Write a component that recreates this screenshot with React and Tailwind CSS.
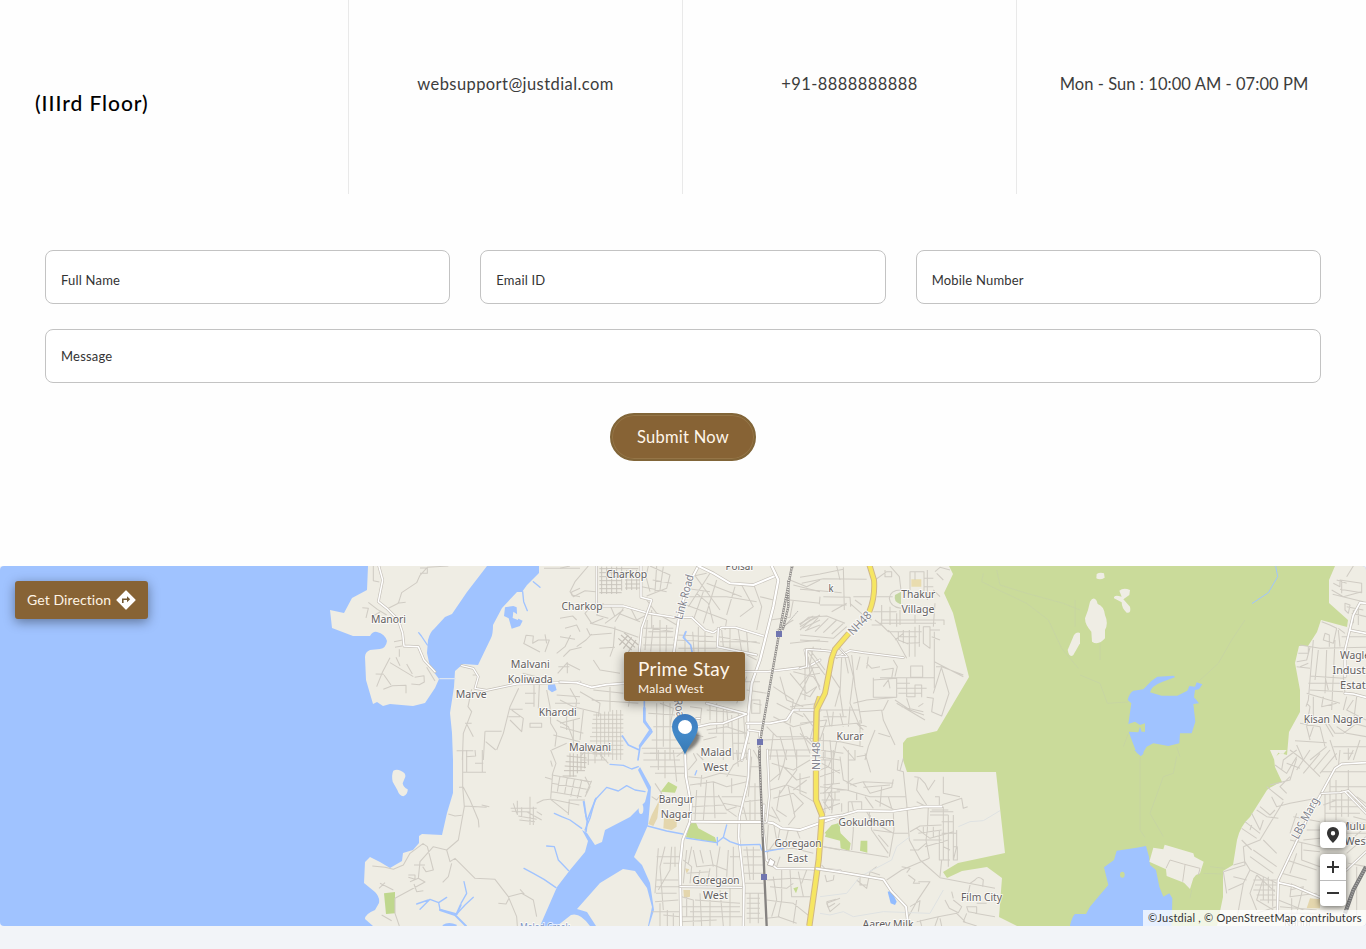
import React from "react";

const WATER = "#a0c3ff";
const LAND = "#efede4";
const GREEN = "#cadb9a";

/* Each tile keeps its own drawing grid, three units to the pixel. */
function Tile({ x, y, children }) {
  return <g transform={`translate(${x} ${y}) scale(0.33333)`}>{children}</g>;
}

function Minor({ d }) {
  return <path d={d} fill="none" stroke="#d0ccc4" strokeWidth="3.2" strokeLinejoin="round" />;
}

function Faint({ d }) {
  return <path d={d} fill="none" stroke="#c7d5a2" strokeWidth="3" />;
}

function Road({ d, w = 6 }) {
  return (
    <g fill="none" strokeLinejoin="round" strokeLinecap="round">
      <path d={d} stroke="#c6c1b9" strokeWidth={w + 4} />
      <path d={d} stroke="#ffffff" strokeWidth={w} />
    </g>
  );
}

function Stream({ d, w = 4 }) {
  return <path d={d} fill="none" stroke={WATER} strokeWidth={w} strokeLinejoin="round" strokeLinecap="round" />;
}

function Label({ x, y, w, children, fill = "#636060", rotate, opacity }) {
  return (
    <text
      x={x}
      y={y}
      textAnchor="middle"
      textLength={w}
      lengthAdjust="spacingAndGlyphs"
      fontSize="11.5"
      fontFamily="'Noto Sans', sans-serif"
      fill={fill}
      opacity={opacity}
      stroke="#ffffff"
      strokeOpacity="0.75"
      strokeWidth="2"
      strokeLinejoin="round"
      paintOrder="stroke"
      transform={rotate ? `rotate(${rotate} ${x} ${y})` : undefined}
    >
      {children}
    </text>
  );
}

function Terrain() {
  return (
    <g>
      <rect x="0" y="566" width="1366" height="360" fill={WATER} />
      <path
        fill={LAND}
        d="M368 566L367 590L352 598L344 613L330 610L332 628L353 636L370 636Q373 631 377 632Q385 634 387 641Q386 648 380 649L370 650Q365 652 365 657L366 680L373 704L377 702L383 706L390 704L413 706L425 703L435 688L439 679L430 667L427 653L428 640Q430 632 434 629L445 617L452 614L467 592L487 566Z"
      />
      <path
        fill={LAND}
        d="M539 566V573L527 585L522 592L517 592L502 608L493 625Q493 634 491 638L478 665L463 664L455 671L454 687L450 713L452 733L453 760V793L447 813L442 835L422 834L419 836V843L413 850L403 853L402 861L390 868L380 862L370 857L365 862L364 883L375 892Q380 897 379 903L375 910Q365 914 365 919L373 926H1366V566Z"
      />
      <path
        fill={GREEN}
        d="M949 566L953 574L944 593L953 613L969 677L937 731L907 738L903 743V760L907 772H996L1005 853L958 863L943 872L947 878L962 871L987 867L1002 878L999 917L1017 926H1217L1223 897V871L1233 865L1237 840Q1240 826 1250 817L1267 790Q1275 784 1282 782L1275 767L1274 758L1280 753L1287 755L1289 732L1300 712V690L1295 663L1299 646H1308L1317 632L1321 620L1347 627L1348 620L1329 603V580L1335 566Z"
      />
      <path fill={WATER} d="M540 926L557 887L570 870L585 852L588 841L582 830L587 833L595 845L602 842L605 830L630 817L645 802L648 790L638 770L640 767L651 787L650 803L648 825L634 857L642 865L650 883L654 910L649 926H648L652 907L647 888L635 871L623 869L600 883L577 909L587 912L596 926H590Q580 912 571 915L557 926Z" />
      <ellipse cx="641" cy="809" rx="2.4" ry="5" fill={LAND} />
    </g>
  );
}

function WestTiles() {
  return (
    <g>
      <Tile x={320} y={560}>
        <Minor d="M160 18V62L178 66M385 18L322 22L300 46L290 68L245 98L235 130L205 145M300 24H322V40H300M232 130L257 127M145 127L172 148L200 165M127 143L145 145L138 174M155 170L180 156M222 245L248 240M225 262L246 258M238 268V290M210 293L188 335L170 380M210 308L280 350M228 292L240 317M260 312L277 342M167 342L192 343M192 345L213 375M190 388L217 377L258 376V400M274 372L298 374L313 366L312 347L284 352M320 322L345 363" />
        <Minor d="M455 388L444 440L455 455L430 520L427 600M435 490H455M410 572H460M440 492L460 530M458 345H475M596 385L570 440L550 520L530 570M496 514H545M495 514L490 600M497 545L527 570M575 450L610 475L605 515L570 480M630 490H665V502H630ZM570 448H608M565 470H600M612 250L618 226L640 228L638 250L655 240H688L675 276M675 223L680 250M610 250L660 276M752 225L735 260L710 280M713 340L742 308V340M715 320H748M608 340L650 350M658 375L655 445M642 375V440M615 400H648M615 430H642M680 390L690 440L692 490L710 520L705 560M710 405L780 410M705 430H780M710 480L745 500L760 540M700 525L780 545M695 570L740 550M672 25H780M780 85L755 96V105L780 110M720 490L780 475M740 450V510" />
        <Road w={4.5} d="M176 16L188 60L175 125L200 145L235 180L248 220L252 258L295 260L312 300L345 335" />
        <Road w={4} d="M425 317L460 325L475 350L465 385L500 391L590 372L690 369L780 366" />
        <path d="M358 356H407" stroke="#dbe4f2" strokeWidth="4" />
        <Stream d="M322 255L304 228L296 218" />
        <Stream d="M608 95L611 125L622 152M640 65L660 82" />
        <path fill={WATER} d="M555 142L580 138L590 142L592 175L608 182L600 198L575 206L566 175L552 168ZM684 375L705 373L710 390L696 397L684 388Z" />
        <path fill={LAND} d="M580 155L596 166L594 180L578 174Z" />
      </Tile>

      <Tile x={340} y={750}>
        <path fill={LAND} d="M160 62Q170 56 182 62Q198 68 196 80L188 100Q190 112 203 118Q205 132 190 139Q178 138 172 120L158 95Q154 75 160 62Z" />
        <path fill="#bfd78d" d="M132 430L165 426V490L138 492Z" />
        <Minor d="M368 0V110L373 170L355 270L320 300L280 290L240 335L235 385L210 395M368 67H438M378 20L407 18L405 0M380 0V67M405 40H430M427 0V67M357 112H370L390 150L415 210L417 232M373 168L440 172M425 165L448 170M325 192L345 198L365 196M248 280L262 290L280 360L258 365L248 350M97 348L135 352L160 358L190 345L210 310L250 280M222 345L255 345M205 375H225V388L205 382M235 385L255 396L165 445V490L178 528M120 400L160 420M117 415L135 398M222 402L230 425L250 422M320 300L330 335L345 325L405 385L465 388L505 440L530 500L532 528M335 340L325 380L308 397M505 440L545 430L580 450L590 500M540 418L553 432M475 460L498 462L507 445M155 512L125 495" />
        <Minor d="M512 175H590M520 160L530 190M532 152V195M515 184L570 186M545 172V205M560 185L605 210M570 140V225M535 198L590 208M580 170V225M590 160L610 150L630 148M590 185L606 195M538 210L585 215M632 0L648 40L638 70L632 145M635 75L752 95M635 100L740 118M635 125L725 140M630 147L718 165M688 148L685 195M632 148L685 190M660 78L652 125M682 82L674 130M703 88L692 140M725 92L712 145M755 92L738 130M735 150L690 150M615 82L635 88M637 50L632 32" />
        <path d="M680 18L740 24M677 35L740 38M674 48L738 52M672 62L735 62M690 10V80M700 10V80M712 12V70M723 5V60M734 5V55M668 78H710" stroke="#c8c3bb" strokeWidth="3" />
        <Stream w={5} d="M768 145L742 210L738 245M732 155L740 210" />
        <Stream w={4} d="M643 190L665 200L690 210L725 235M620 288L643 290L655 330L686 362M552 355L580 370L612 388L648 413" />
        <Stream w={4} d="M372 395L380 430L363 460M400 442L375 465L350 492L300 478L296 458L270 448L240 478M265 450L230 462M296 458L320 442" />
        <Stream w={6} d="M300 480L345 495L378 528M350 492L362 465" />
        <path fill={WATER} d="M308 525Q325 514 350 524V528H308Z" />
      </Tile>
    </g>
  );
}

function CityTiles() {
  return (
    <g>
      <Tile x={560} y={560}>
        <path d="M118 26H235M118 38H235M118 50H188M118 62H185M118 74H183M118 86H185M118 98H185M125 20V102M140 20V102M155 20V102M170 20V102M185 20V92M200 30V90M215 30V90M230 30V90M195 60H240M195 72H240M195 84H240" stroke="#c9c5bd" strokeWidth="3" />
        <path d="M175 235L215 270M183 225L225 262M192 218L235 255M205 225L178 255M215 232L190 266M228 240L205 276" stroke="#c5c0b8" strokeWidth="3.5" />
        <path d="M100 465H190M98 478H190M96 491H190M96 504H190M96 517H190M90 530H190M90 543H190M98 556H190M98 569H190M98 582H190M110 460V590M122 460V590M134 455V590M146 455V590M158 450V600M170 450V600M182 450V600" stroke="#cbc7be" strokeWidth="2.5" />
        <Minor d="M0 25L30 18M85 18L45 65L30 95L40 110L75 92L107 95M0 175L38 168L50 180M15 205L50 195L60 215M0 230L45 238M50 260L78 240L95 222M10 290L30 270L65 262M100 130L75 160L95 190L130 175M130 130L110 165L145 175M135 190L190 150M150 135L165 170M190 145L165 185M90 190L160 205L235 232M80 205L90 225L155 220M165 200L160 262L150 290M175 160L240 185M210 140L230 180L260 165M118 265L165 262M100 300L120 330L180 340M20 310L60 330M30 385L50 420L45 465M0 420L40 440L120 460M60 395L120 430L115 470M100 390L190 400M95 420L235 430M150 380V455M215 380L205 440M0 500L70 520M40 480V560M70 450L60 540" />
        <Minor d="M265 18L258 50L270 95M270 18L330 45L320 85L260 108M245 80L320 95M290 18L285 95M278 60L335 70M310 20L300 90M260 120L290 160L350 195M275 150V205L340 215M250 205H340M262 180L255 270M280 195L272 275M300 180V275M320 195L318 275M250 232H340M250 255H340M265 215H335M390 50L440 40M375 85L450 95M380 110H500M400 40L480 150M450 40L385 140M365 130L500 180M430 95L400 180M470 60L430 190M440 70L545 110M525 80L500 165M545 75L580 140L540 170M500 110L590 125M410 100L445 130L460 190M340 240L470 245M355 265H470M375 215V275M398 215L402 275M415 200V275M435 215V275M355 225L460 230M485 210L490 260M510 205V270M535 210L545 275M560 215L565 280M475 230L600 250M480 245H590M500 180L495 210M580 70L605 140L590 210" />
        <Minor d="M560 285L590 300M560 350L530 430M555 365H600M560 390L620 400M575 420H600V460H575ZM580 430L605 435M450 435V480M470 430V520M490 440V600M440 450L540 460M500 445L505 500M515 465L520 600M535 460V600M550 455L560 600M445 520H560M430 540L470 530M520 550H570M520 580H570M390 440L425 445L420 490M380 500V600M390 520L430 530M300 430L340 445L330 500M310 425V560M330 430V600M265 460L345 465M280 500H340M275 540H370M245 565H370M290 430V600M350 590L375 570M270 580H340M410 580L430 600M440 510L500 500L560 520" />
        <Minor d="M630 180L690 172L700 120M690 60L740 80L780 60M700 75L780 95M690 120L780 130M640 120L600 110M700 25V18M720 200L780 165M728 205L780 180M735 212L780 195M718 192L760 168M650 210L700 180M690 250L780 240M660 330L780 322M690 340L740 400L770 380M660 350L680 420L730 440M640 380L700 420L690 490M650 430L730 470M640 470L700 500L780 480M700 335L760 350L780 380M620 500L650 530H740L770 560M640 520L630 600M660 530L680 600M690 500L710 600M720 500L750 580M600 540L780 535M620 570H760M735 325V420M690 440L780 430M760 320L700 450" />
        <Road d="M0 366L50 368L95 382L140 374L192 370" w={5} />
        <Road d="M110 18V130" w={3} />
        <Road d="M130 138H190L265 160L340 172H395L435 210L460 218L485 202L525 202L610 228" w={4.5} />
        <Road d="M243 18V112L275 120L245 205L238 275" w={4.5} />
        <Road d="M415 18L385 75L360 150L342 275" w={6} />
        <Road d="M415 18L460 40L510 70L580 75L645 48" w={6} />
        <Road d="M635 18L655 60L640 140L600 300L575 370L565 460V520L545 600" w={6.5} />
        <Road d="M475 205L472 260L590 285M555 335H620L745 320L780 300M745 320L735 270L780 268" w={4.5} />
        <Road d="M440 430L560 462L490 490L450 492L415 500M560 490H630L680 480L700 450H780" w={5} />
        <Road d="M420 475H410M565 510L600 515L595 560" w={4} />
        <Stream w={5} d="M378 215L370 232L392 255L398 285M253 425V480L276 515L240 560L234 600M187 528L205 555L238 570" />
        <Stream w={8} d="M253 445V485L272 510L240 558" />
        <path d="M696 18L657 222L600 546L598 600M685 60V140L668 210" stroke="#8d8a88" strokeWidth="7" fill="none" />
        <path d="M696 18L657 222L600 546L598 600M685 60V140L668 210" stroke="#efede4" strokeWidth="4.5" strokeDasharray="3 4" fill="none" />
        <path d="M663 212L715 152" stroke="#8d8a88" strokeWidth="2" strokeDasharray="5 3" />
        <path fill="#7176b0" d="M648 213H666V231H648ZM591 537H609V555H591Z" />
        <path d="M780 410L770 440L768 545" fill="none" stroke="#d0ba92" strokeWidth="19" />
        <path d="M780 410L770 440L768 545" fill="none" stroke="#f6e662" strokeWidth="13" />
      </Tile>

      <Tile x={580} y={750}>
        <path fill="#c4da90" d="M242 125L265 95L292 110L285 128ZM330 220L348 218L355 235L405 262L410 278L318 262ZM740 245L780 215V272L735 260ZM640 415L655 410L648 430Z" />
        <path fill="#e4d6ad" d="M215 195L238 150L232 205L220 228L205 222ZM252 205H290V230L275 240L250 235ZM310 420H330V440L312 445ZM315 355L328 358L320 370Z" />
        <Minor d="M190 10H310M190 30H300M210 50H320M225 70H322M235 0V60M255 0V85M280 0L290 95M0 20L20 0L60 12L85 40M0 10H95M0 30H80M25 0V45M45 0V40M65 0V30M225 100L245 130L230 150L215 140M0 90L28 95M15 80L30 110L15 140M325 60L350 30L340 10M325 80L370 85L420 70L500 80M330 105L400 95L440 110L500 95M350 120L345 210M380 90L370 210M400 95L405 205M415 135L440 180L470 170M425 140H500M430 160L485 170M435 175L470 200M335 140H420M335 170L430 165M320 190H440M455 85V130M500 20L460 45L440 80M470 0L475 50M365 75L362 110M515 20L505 140M520 0L540 35M510 50H540M505 110H545M495 155L540 150M485 190H545M490 170L500 210M510 150V210M525 100V210" />
        <Minor d="M565 18H690M575 40L640 60L690 30M590 0L600 70L570 95M620 0L610 50L650 90L690 80M650 0V60L600 130M570 120L620 105L680 130M580 145L640 130L670 160L640 190M600 120L590 180L620 200M625 110L645 200L625 225M660 70V130L710 160M680 90L640 120M575 170L600 215M555 190L590 205M715 20L780 30M725 40L780 70M720 80L780 60M735 0V190M755 0V180M730 105L780 100M720 130L780 125M725 150H780M725 180L780 160M740 200L720 220M610 45L595 90" />
        <Minor d="M235 295L225 430M255 290L240 350L250 480M275 290L270 360L235 420M230 320H300M250 340H300M230 390H295M225 410H300M285 290V350M228 430H290M225 455L295 450M215 485H300M250 495L300 500M240 460V528M262 480V528M280 490V528M310 330L335 350L330 400M320 300L310 400M340 300L350 350L400 345L440 360M360 300L370 340M390 300L400 350M420 290L410 350M445 300L440 380M320 370L390 365M360 360L350 410M390 355L380 410M410 350V410M305 440L340 450V528M320 440V500M360 430L365 528M390 430V528M420 420L430 528M450 415V528M305 470H480M305 500H490M330 485H480M345 450L480 460M450 320H480M335 290L325 340M460 290V400M300 515L410 510" />
        <Minor d="M490 300H540M490 320H545M490 345H550M490 370H550M500 290L510 390M520 290V390M490 400H550M495 430H555M500 445H540M500 460H540M500 475H540M500 490H540M500 505H550M510 430V520M535 430V520M565 225L560 300M580 215L590 270L560 310M600 235L590 290M625 240L615 280M650 240L660 265M555 300L640 295L700 310M600 320L590 350M560 390L640 385L695 390M570 410L620 415L640 400M580 380L590 450L575 500M605 360V450L595 500L650 520M630 360L635 440L690 440M655 365L670 440M680 360L665 400M560 450L600 455M650 450L640 520M560 505L600 500M600 455L640 460L690 500M730 290L780 300M725 345L740 362M740 460L780 445M740 460L750 485L780 460" />
        <Road w={6} d="M315 0L318 80L333 160L330 215L308 270L300 345L303 528" />
        <Road w={5} d="M508 0L505 80L500 110L478 200L476 260L485 340L492 410L490 528" />
        <Road w={6} d="M335 215L440 216H555L580 220L605 235L660 240L780 198" />
        <Road w={4} d="M562 0L568 140L560 215M300 410L485 412" />
        <Road w={5} d="M552 165L548 230L560 330L590 355L690 356L780 362" />
        <path d="M570 325L585 335L578 350L562 345Z" fill="#fff" stroke="#bcb7b0" strokeWidth="3" />
        <Stream w={4} d="M90 43L130 46L155 57L175 50M195 125L165 120L140 107L115 123L80 112L45 150L30 205L15 240M10 155L18 200M203 228L260 243L308 252M318 264L410 278L430 262L450 275L480 285L540 283L545 300M440 225L430 262M412 285V262M555 305L610 295M345 75L350 62" />
        <path d="M538 0L548 260L560 528" stroke="#858280" strokeWidth="7" fill="none" />
        <path d="M538 0L548 260" stroke="#d8d4cf" strokeWidth="3" strokeDasharray="4 4" fill="none" />
        <path fill="#7176b0" d="M543 372H561V390H543Z" />
        <path d="M708 62V150L726 195L716 330L688 528" fill="none" stroke="#cfb78a" strokeWidth="19" />
        <path d="M708 62V150L726 195L716 330L688 528" fill="none" stroke="#f6e662" strokeWidth="13" />
      </Tile>
    </g>
  );
}

function EastTiles() {
  return (
    <g>
      <Tile x={800} y={560}>
        <path fill="#e9dcae" d="M334 58H364V80H334Z" />
        <path fill="#c4d6a0" d="M303 95L285 105Q280 125 300 132H303Z" />
        <Minor d="M0 52L60 42L130 28M5 70L70 56L200 58M0 88L60 92L125 98M130 22L133 150M60 135L140 135M60 110L58 133M70 110L150 112L152 140M95 155L140 130M110 18L120 60M160 110H210M150 130L195 170L215 180M165 120L185 135M225 60L260 35H275V50H255V30M230 110H278M270 18L298 50L303 90M303 90Q270 90 268 115Q270 140 303 145M330 90V35H372V95M345 35V60M382 30V120M372 55H400M372 80H400M220 155H290M225 180L245 195M245 135V195M270 140V195M290 160V200M245 180H410M240 190H408M300 150V195M345 165V190M215 195L245 195L265 215H365M265 210L290 240L320 295M295 215V240L325 252M310 210V250M328 210V290M345 200V290M358 195V260M285 240L310 220M300 230H350M320 250L360 248M370 200H390V265L370 250ZM390 210H420M395 230L420 240M410 40L430 60M405 35L420 22L450 30M400 90L420 110M405 130L400 200M410 180H432V195M403 215V385" />
        <Minor d="M0 195L25 172L80 168L135 190M0 210L30 180L50 172M20 210L55 172M45 215L85 175M70 218L110 180M95 222L130 190M0 225L100 235L140 200M0 240L85 245M0 375L30 340L25 290M20 270L60 325L75 345M30 270L75 330M40 260L30 310L60 390M0 400L30 410L50 380M60 340L30 345M90 340L120 385L105 440M125 290L120 400L130 470M145 290L160 350L150 430L180 500M155 285L165 380L185 490M135 290L145 340M180 290L170 330M200 310L215 325L240 320M205 290L200 325M245 330L280 325L275 355M280 300L292 320L285 350M332 318H368V352H332ZM240 353H403M220 353V412H290V353M220 360L290 355M250 380L265 360L270 385M320 355V410H345V375H365V412M290 370H330M290 385H380M295 400H365M290 412L200 420L160 430M285 420L330 450L372 465M290 430L375 480M305 440L370 455M320 415L330 445M265 420L250 450L180 455M380 412L400 415L395 455L425 468L447 400L425 325M400 400L425 320L490 345M403 305L490 350M408 320H430" />
        <Minor d="M60 450H180M70 470H140M10 460L40 500L30 540M0 490L80 480L60 540M80 450L90 500M100 455L95 500M120 460L130 500M150 440L145 500M60 500L170 490L190 510M180 480V560M170 490L200 500M50 540L120 545L190 560M70 520V600M90 540L95 600M110 545L100 600M130 560L165 600M55 570L130 580M245 450L250 480L285 555M225 510L205 560L195 600M235 520L270 530M355 440L370 430M0 520L40 560" />
        <Road w={4} d="M0 325L20 320V268L75 272L100 275M110 292L150 272L190 278L310 293M0 450H42" />
        <Road w={3} d="M115 260L142 290L105 290" />
        <path d="M208 14L222 60Q226 110 208 155M146 220L105 268L95 295L75 400L50 450L47 545" fill="none" stroke="#cfb78a" strokeWidth="18" />
        <path d="M208 14L222 60Q226 110 208 155M146 220L105 268L95 295L75 400L50 450L47 545" fill="none" stroke="#f6e662" strokeWidth="12" />
        <Faint d="M550 40L545 65L600 92L680 130L745 180L785 265L835 325M590 30L600 75L680 100L790 130L840 150M825 120V200" />
        <path fill={LAND} d="M822 225Q830 215 840 219V250L820 285Q808 295 803 270Z" />
      </Tile>

      <Tile x={1080} y={560}>
        <path fill={LAND} d="M50 42Q60 36 72 40L74 53Q60 62 49 55ZM30 125Q40 108 50 122L53 132Q72 138 75 165Q86 190 75 210V235Q55 258 36 245L34 215Q15 195 15 175L24 150ZM118 92Q130 82 150 90L148 105L130 118L150 140Q155 160 140 158Q125 145 125 127L102 115Q100 103 125 110Z" />
        <Faint d="M60 250V300M0 345L60 370L82 430L145 426M495 180L455 240L415 310L355 365M130 560L145 520M290 560L300 590" />
        <Stream d="M587 18L593 50L565 98L517 130" w={3} />
        <path fill={WATER} d="M143 420Q147 400 160 392L190 388L215 362L232 350L282 347L285 352L248 365Q213 378 210 397L245 407L292 407L322 392L328 378L345 380L350 367L367 373L357 388L345 390L342 412L357 430L340 432L346 485L335 520L300 520L298 550L265 558L220 550L200 560L183 588L170 578L157 545L146 515L175 517L180 500L185 515H195V490L180 495L165 485L145 492L154 430Z" />
        <Minor d="M760 70L780 80V60L845 70V98L780 88M785 60V100M770 60L800 70M755 90L790 110L845 95M758 103L850 125M820 18L800 50M795 130L810 135L805 160L795 150ZM800 140L850 150M820 150V190M835 140V195M815 160L858 170M725 185L750 195L770 205L760 250L730 240L735 220L748 225V260M660 255L720 265L858 262M685 260V280L655 280M690 262L680 300L650 305M700 240L685 420L678 440M740 270L735 400M765 240L755 450M775 210L780 260M715 270L705 360M660 320L685 310M650 320L690 325M690 348L790 355M685 370H795M690 390L790 395M680 400L780 430M730 410L725 440L770 430M700 410V470M790 350L795 400M785 230H858M775 205L795 220M735 350L745 390M680 430L690 440L680 500L690 540M645 542L740 548M720 500L735 560M700 500L690 530M660 490L720 500M730 480L760 530M745 490L765 520H790L830 490M820 420L800 450L858 480M800 410L790 450M830 410L820 490L858 500M770 500L800 520L858 530M740 560L690 600M750 540L770 600M650 555L670 600M760 560H858M790 580H820M805 565V600M840 540L820 600" />
        <Road w={5} d="M858 130L840 128L820 165L808 215L795 270V350M808 210L858 220M795 400L820 402L858 412" />
      </Tile>

      <Tile x={820} y={750}>
        <path fill="#c4da90" d="M13 250L35 225L55 220L62 250L92 280L88 303L62 295L60 270L35 255ZM122 272H142V308L120 302Z" />
        <path fill="#92bcff" d="M203 425L215 422L230 455L225 465L212 460Z" />
        <Minor d="M235 30L232 60L250 65L260 160L268 270L300 330L360 383L525 415M250 25L240 62M85 0V120M105 0V30H85M0 60L25 50L35 25M40 0V100L10 130M0 110L80 120L150 140H258M60 20L70 90L110 110M135 10L152 67M110 20L140 15M90 105L130 95L220 100M130 97L150 130L215 112L220 88M130 112L210 105M185 110L180 170M110 130V150M35 120L15 160M10 155L30 180M25 130L40 150L35 190M45 125V150M85 155H125V180M85 155V195M65 160V185M95 155L100 180M205 140L215 175M165 150L220 178M135 140L160 175M80 100L100 85M50 120H80M0 30H35" />
        <Minor d="M283 80L295 82L290 120L320 165M298 82L315 100L325 120L345 90M370 80V130L420 140M365 165L425 145L430 175L443 170M345 140H358V165M325 170L322 240L318 270L328 325M330 185H400M330 195H385M370 170V260M385 195V350M400 195V330L410 290V240M335 180H385M365 215H400V195M270 245L300 228L365 225M290 235L330 265L400 245M295 250L365 240M310 230V250M340 230V260M280 270L365 270M315 290L385 270M358 240V330H390M370 240V330M365 250H410M400 290H412V330H400M270 300L295 300L318 280M365 330L360 380M370 290L390 300M290 155L320 170M148 185V210L220 250H265M150 195L155 240L205 310M220 190L222 240L208 320M175 255L205 290M100 200V240L95 300M10 290L205 322M160 240L222 248M140 185L160 220M15 375L20 395L40 390L42 375M110 390L140 415L150 365L170 350M120 378V405H140M150 365L180 375M200 390L245 360L328 325M245 350L270 355L260 368M265 375L285 390L280 400H300M295 395L330 395L290 455L265 500M20 455L48 448M20 455L25 472L45 460M270 470L300 452L295 485M290 515L355 500L345 528M355 500L410 490L435 515M375 450L388 475L415 488L425 470L400 450M395 425L400 445M440 470H470V490L445 485ZM440 490L430 515L470 528M465 490L525 500M450 400L465 390Q475 375 490 390L488 410M450 405L445 430M360 505L365 528M300 510L305 528M470 460H500" />
        <path d="M415 230L450 215L490 212L540 182M270 260L230 290L215 330L120 380L80 430L0 440M0 490L30 495L70 485L100 500L190 485L330 490L370 420" fill="none" stroke="#dfe2e2" strokeWidth="3" />
        <Road w={5} d="M0 205L70 195L115 182L215 184L310 170H365" />
        <Road w={5.5} d="M-10 356L70 368L190 388L215 425L258 470L265 528" />
        <path fill={WATER} d="M750 528Q756 500 765 492L800 495L812 470L840 440V528Z" />
      </Tile>

      <Tile x={1090} y={750}>
        <path fill={WATER} d="M133 0H160V12L152 18ZM-60 528Q-50 495 -43 492H-12L0 470L25 440L55 405L42 352L72 330L80 302L140 293L168 288L177 320L180 345L198 360L208 410L220 440L238 430L247 445L245 528Z" />
        <ellipse cx="97" cy="374" rx="7" ry="9" fill={GREEN} />
        <path fill={LAND} d="M190 293L220 298L224 284L310 310L313 320L341 335L330 370L318 375L310 385L300 417L282 398L230 378L228 358L178 335ZM565 8L580 12L590 0H540L553 30Z" />
        <path d="M228 355L240 330L280 342L330 355L325 375M285 345L278 395" fill="none" stroke="#d0cbc2" strokeWidth="3" />
        <Faint d="M150 20V240L165 262M260 20L250 70L220 80L180 190L220 260M305 420L300 445M340 370L395 372M360 350L405 355" />
        <path fill="#e4d6ad" d="M660 445L690 448V475L650 475Z" />
        <Minor d="M555 45L590 70L620 20M575 60L580 30L620 0M600 0L640 30L690 80M620 25L600 90L540 105M660 0L620 60M690 10L640 70M720 0L670 60M740 10L690 70M590 40L630 55M600 80L570 110L590 130M530 110L580 150M545 140L560 170L600 160L680 145M510 170L540 195L555 180M485 190L510 240L520 210M465 215L510 250M455 235L500 265M480 240L485 225M580 155L510 270L460 290M460 290L465 345L400 365M500 180L530 200L565 205M520 270L560 310M490 300L560 350M480 320L550 370M455 270L485 300M430 345L465 335L480 360L560 400M400 365L410 430M480 360L460 400L440 510M500 375L480 430L500 480M520 385L500 450L550 480M500 375L555 425M490 390H560M495 405H560M490 420H555M500 435H555M510 450H560M520 380V450M535 380V460M548 390V470M430 380L470 390M415 420L460 400" />
        <Minor d="M705 130V220M720 90V180M738 90V210M755 120V200M775 60V200M720 110H828M725 150H800M720 170H800M705 190H810M700 165L740 150M695 65L828 65M750 0L745 50M790 0L775 30M610 200L690 215M620 190L600 250M650 240H690M640 270L690 265M635 280V330L690 350M640 300L690 305M600 270L690 290M590 330L680 360M575 370L650 390M620 310L600 370M605 400L600 440L680 430M600 420L640 410L620 490M570 470L680 480M565 450L640 480M605 445V528M770 220H828M770 250H828M770 280L828 230M770 310L828 260M800 140L828 160M770 170H828M790 200L828 210M775 340L828 350M800 350V500M560 490H690M500 490L560 470" />
        <Road w={5} d="M828 38L755 42L735 55L695 128L650 210L565 390L562 490M565 398L610 408L690 442" />
        <Road w={4} d="M695 130L750 128L775 122L828 175M765 125L828 190M770 360L828 305" />
        <path d="M828 350L790 420L765 490" stroke="#777" strokeWidth="12" fill="none" />
        <path d="M828 350L790 420L765 490" stroke="#aaa" strokeWidth="7" strokeDasharray="3 4" fill="none" />
      </Tile>
    </g>
  );
}

function Labels() {
  return (
    <g>
      <Label x={388.5} y={623} w={35}>Manori</Label>
      <Label x={530.3} y={668} w={39}>Malvani</Label>
      <Label x={530.3} y={683} w={45}>Koliwada</Label>
      <Label x={471.3} y={697.5} w={31}>Marve</Label>
      <Label x={557.8} y={716} w={38}>Kharodi</Label>
      <Label x={590} y={751} w={42}>Malwani</Label>
      <Label x={626.7} y={578} w={41}>Charkop</Label>
      <Label x={582} y={610} w={41}>Charkop</Label>
      <Label x={740} y={569.5} w={29}>Poisar</Label>
      <Label x={688} y={598} w={46} fill="#82838c" rotate={-75}>Link Road</Label>
      <Label x={674} y={701} w={46} fill="#82838c" rotate={80}>Link Road</Label>
      <Label x={716} y={756} w={31}>Malad</Label>
      <Label x={715.7} y={771} w={25}>West</Label>
      <Label x={676.3} y={803} w={35}>Bangur</Label>
      <Label x={676.3} y={818} w={31}>Nagar</Label>
      <Label x={798} y={847} w={47}>Goregaon</Label>
      <Label x={797.5} y={862} w={21}>East</Label>
      <Label x={716} y={884} w={47}>Goregaon</Label>
      <Label x={715.5} y={899} w={25}>West</Label>
      <Label x={831} y={592} w={5}>k</Label>
      <Label x={918.3} y={597.5} w={34}>Thakur</Label>
      <Label x={918} y={612.5} w={33}>Village</Label>
      <Label x={862.5} y={626} w={28} fill="#85868f" rotate={-46}>NH48</Label>
      <Label x={820} y={756} w={28} fill="#85868f" rotate={-90}>NH48</Label>
      <Label x={850} y={740} w={27}>Kurar</Label>
      <Label x={866.5} y={826} w={56}>Gokuldham</Label>
      <Label x={981.5} y={901} w={41}>Film City</Label>
      <Label x={888} y={928} w={51}>Aarey Milk</Label>
      <Label x={545} y={931} w={50} fill="#7993c5">Malad Creek</Label>
      <Label x={1355} y={659} w={30}>Wagle</Label>
      <Label x={1357} y={674} w={49}>Industrial</Label>
      <Label x={1356} y={689} w={32}>Estate</Label>
      <Label x={1333.3} y={723} w={59}>Kisan Nagar</Label>
      <Label x={1308.5} y={820} w={45} fill="#82838c" rotate={-62}>LBS Marg</Label>
      <Label x={1359} y={830} w={38}>Mulund</Label>
      <Label x={1357} y={845} w={25}>West</Label>
      <Label x={1298} y={927} w={28} opacity={0.6}>Nahur</Label>
    </g>
  );
}

function MapView() {
  return (
    <svg className="block h-[360px] w-full" viewBox="0 566 1366 360" preserveAspectRatio="none">
      <defs>
        <linearGradient id="pin" x1="0" y1="0" x2="0" y2="1">
          <stop offset="0" stopColor="#3f7cbf" />
          <stop offset="0.5" stopColor="#4289c8" />
          <stop offset="1" stopColor="#3778b2" />
        </linearGradient>
        <filter id="soft" x="-50%" y="-50%" width="200%" height="200%">
          <feGaussianBlur stdDeviation="1.8" />
        </filter>
      </defs>
      <Terrain />
      <WestTiles />
      <CityTiles />
      <EastTiles />
      <Labels />
      <path d="M685 753L690 734Q698 726 700 738Q697 747 685 753Z" fill="#333" opacity="0.6" filter="url(#soft)" />
      <path fill="url(#pin)" d="M685 755C683 747 672 737 672 727A13 13 0 0 1 698 727C698 737 687 747 685 755Z" />
      <circle cx="685" cy="727" r="7" fill="#fff" />
    </svg>
  );
}

function Field({ label, className = "" }) {
  return (
    <input
      type="text"
      placeholder={label}
      className={
        "block h-[54px] w-full min-w-0 rounded-[8px] border border-[#c3c3c3] bg-white px-[15px] text-[13px] tracking-[0.2px] text-[#333] outline-none placeholder:text-[#333] placeholder:opacity-100 " +
        className
      }
    />
  );
}

export default function App() {
  return (
    <div className="h-[949px] w-full overflow-hidden bg-[#f2f4f8] font-['Lato',sans-serif]">
      <div className="h-[566px] bg-[#fefefe]">
        <section className="grid h-[194px] grid-cols-4 px-[15px] text-center text-[16.5px] leading-6 text-[#3c3c3c]">
          <div className="border-r border-[#e9e9e9] pt-[88px] pl-5 text-left">
            <h2 className="text-[21px] leading-[30px] font-medium tracking-[0.95px] text-black">(IIIrd Floor)</h2>
          </div>
          <div className="border-r border-[#e9e9e9] pt-[72px]">
            <p className="tracking-[0.42px]">websupport@justdial.com</p>
          </div>
          <div className="border-r border-[#e9e9e9] pt-[72px]">
            <p className="tracking-[0.42px]">+91-8888888888</p>
          </div>
          <div className="pt-[72px]">
            <p className="tracking-[0.05px]">Mon - Sun : 10:00 AM - 07:00 PM</p>
          </div>
        </section>

        <form className="px-[45px] pt-14" onSubmit={(e) => e.preventDefault()}>
          <div className="grid grid-cols-3 gap-x-[30px]">
            <Field label="Full Name" className="pt-[6px]" />
            <Field label="Email ID" className="pt-[6px]" />
            <Field label="Mobile Number" className="pt-[6px]" />
          </div>
          <div className="mt-[25px]">
            <Field label="Message" />
          </div>
          <div className="mt-[30px] flex justify-center">
            <button className="h-12 w-[146px] rounded-full border-2 border-[#816538] bg-[#876335] text-[16.5px] tracking-[0.25px] text-[#fff6ea] shadow-[inset_0_0_0_1px_#957547]">
              Submit Now
            </button>
          </div>
        </form>
      </div>

      <section className="relative h-[360px] overflow-hidden rounded-[4px]">
        <MapView />

        <button className="absolute top-[15px] left-[15px] flex h-[38px] w-[133px] items-center justify-between rounded-[3px] bg-[#876335] pr-3 pl-3 text-[14px] text-[#fff4e4] shadow-[0_3px_12px_rgba(0,0,0,0.4)]">
          <span className="pb-px tracking-[0.1px] whitespace-nowrap">Get Direction</span>
          <svg width="20" height="20" viewBox="0 0 20 20">
            <path d="M10 1L19 10L10 19L1 10Z" fill="#fff" stroke="#fff" strokeWidth="1.2" strokeLinejoin="round" />
            <path d="M6.8 13V9.2H12" fill="none" stroke="#725833" strokeWidth="1.6" />
            <path d="M11 6.2L14.2 9.2L11 12.2Z" fill="#725833" />
          </svg>
        </button>

        <div className="absolute top-[86px] left-[624px] h-[49px] w-[121px] rounded-[3px] bg-[#876335] pt-[4px] pl-[14px] whitespace-nowrap text-[#fff6ea] shadow-[0_3px_12px_rgba(0,0,0,0.4)]">
          <p className="text-[19px] leading-[25px] tracking-[0.3px]">Prime Stay</p>
          <p className="text-[12px] leading-4 tracking-[0.3px]">Malad West</p>
        </div>

        <p className="absolute right-0 bottom-0 h-4 w-[223px] bg-white/75 pl-[5px] text-[11px] leading-4 tracking-[0.22px] whitespace-nowrap text-[#333]">
          ©Justdial , © OpenStreetMap contributors
        </p>

        <button
          aria-label="Locate"
          className="absolute top-[256px] left-[1320px] flex size-[26px] items-center justify-center rounded-[4px] bg-white shadow-[0_1px_6px_rgba(0,0,0,0.6)]"
        >
          <svg width="14" height="16" viewBox="0 0 14 16">
            <path
              fillRule="evenodd"
              fill="#333"
              d="M7 0A6 6 0 0 0 1 6.2C1 10.5 7 16 7 16S13 10.5 13 6.2A6 6 0 0 0 7 0ZM7 4A2.2 2.2 0 1 1 7 8.4A2.2 2.2 0 0 1 7 4Z"
            />
          </svg>
        </button>

        <div className="absolute top-[288px] left-[1320px] flex h-[52px] w-[26px] flex-col rounded-[4px] bg-white shadow-[0_1px_6px_rgba(0,0,0,0.6)]">
          <button aria-label="Zoom in" className="flex flex-1 items-center justify-center border-b border-[#bbb]">
            <svg width="14" height="14" viewBox="0 0 14 14">
              <path d="M1 7H13M7 1V13" stroke="#333" strokeWidth="2" />
            </svg>
          </button>
          <button aria-label="Zoom out" className="flex flex-1 items-center justify-center">
            <svg width="14" height="14" viewBox="0 0 14 14">
              <path d="M1 7H13" stroke="#333" strokeWidth="2" />
            </svg>
          </button>
        </div>
      </section>
    </div>
  );
}
